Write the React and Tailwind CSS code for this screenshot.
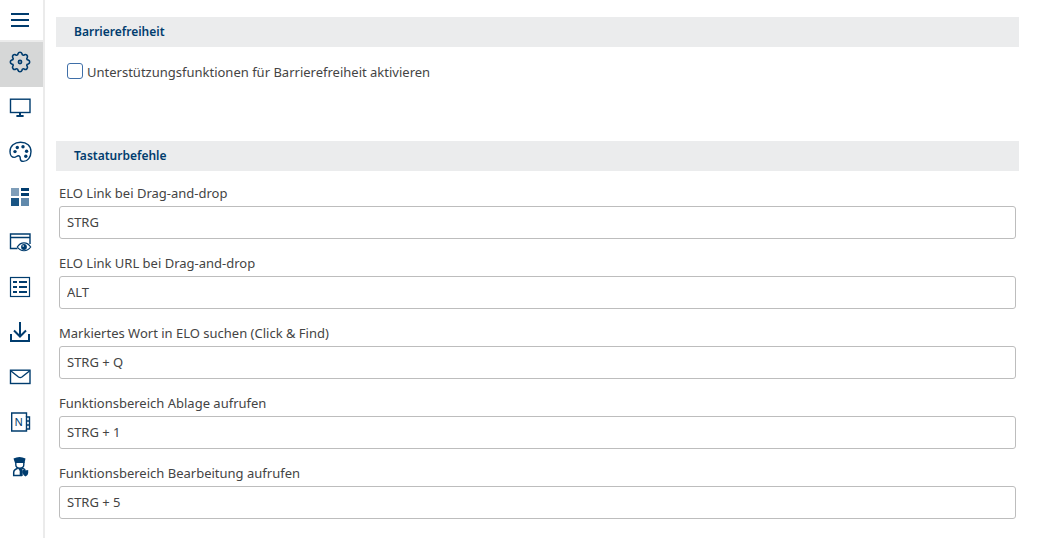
import React from "react";

function point(radius, degrees) {
  const a = (degrees * Math.PI) / 180;
  return `${(12 + radius * Math.cos(a)).toFixed(2)} ${(12 + radius * Math.sin(a)).toFixed(2)}`;
}

function gearPath() {
  let d = `M${point(8.5, -14)}`;
  for (let k = 0; k < 8; k += 1) {
    d += `A2.2 2.2 0 0 1 ${point(8.5, k * 45 + 14)}`;
    d += `A1.3 1.3 0 0 0 ${point(8.5, k * 45 + 31)}`;
  }
  return `${d}Z`;
}

function Icon({ children }) {
  return (
    <svg
      viewBox="0 0 24 24"
      className="size-6 shrink-0"
      fill="none"
      stroke="#003c6e"
      strokeWidth="1.4"
      aria-hidden="true"
    >
      {children}
    </svg>
  );
}

const items = [
  {
    label: "Allgemein",
    icon: (
      <>
        <path d={gearPath()} strokeWidth="1.6" />
        <circle cx="12" cy="12" r="1.6" strokeWidth="1.6" />
      </>
    ),
  },
  {
    label: "Anzeige",
    icon: (
      <>
        <rect x="2.5" y="4.2" width="19.5" height="13.3" />
        <path d="M11 18h2v2h2.6v2H8.4v-2H11z" fill="#003c6e" stroke="none" />
      </>
    ),
  },
  {
    label: "Design",
    icon: (
      <>
        <path d="M12.6 2.300C6.500 2.300 2 6 2 11.500C2 15 3.800 17.400 6.200 17.400C8.200 17.400 8.700 15.700 10.300 15.700C12 15.700 12.300 17.200 12.300 18.700C12.300 20.500 13.600 21.400 15.300 21.400C19.600 21.400 23 17.200 23 11.600C23 5.800 18.800 2.300 12.600 2.300Z" />
        <g fill="#003c6e" stroke="none">
          <circle cx="9.300" cy="7.500" r="1.700" />
          <circle cx="15" cy="6.700" r="1.700" />
          <circle cx="18.600" cy="11.300" r="1.700" />
          <circle cx="7" cy="11.600" r="1.700" />
          <circle cx="17.800" cy="16.300" r="1.700" />
        </g>
      </>
    ),
  },
  {
    label: "Kacheln",
    icon: (
      <g stroke="none">
        <rect x="3" y="3" width="8" height="8" fill="#7f9eb9" />
        <path d="M13 3h8v3h-8zM13 8h8v3h-8z" fill="#003c6e" />
        <rect x="3" y="13" width="8" height="8" fill="#1a5584" />
        <rect x="13" y="13" width="8" height="8" fill="#6189ab" />
      </g>
    ),
  },
  {
    label: "Vorschau",
    icon: (
      <>
        <path d="M9.500 18.500H2.500V4H22v10M2.500 7.500H22" />
        <path d="M9.300 17c3.500-5.500 9.900-5.500 13.400 0c-3.500 5-9.900 5-13.400 0Z" fill="#fff" strokeWidth="1.200" />
        <circle cx="16" cy="17" r="2.900" fill="#003c6e" stroke="none" />
        <circle cx="15.200" cy="16" r="0.800" fill="#fff" stroke="none" />
      </>
    ),
  },
  {
    label: "Listen",
    icon: (
      <>
        <rect x="2.500" y="2.500" width="19" height="19" strokeWidth="1.200" />
        <path d="M5 7h4M11 7h8M5 12h4M11 12h8M5 17h4M11 17h8" strokeWidth="2" />
      </>
    ),
  },
  {
    label: "Download",
    icon: <path d="M3 14v7h18v-7M12 2v14.500M6 10.500l6 6l6-6" strokeWidth="2" />,
  },
  {
    label: "E-Mail",
    icon: (
      <>
        <rect x="2.500" y="5.200" width="19.500" height="13.300" />
        <path d="M3 6l7.500 6q1.700 1.200 3.400 0L21.500 6" />
      </>
    ),
  },
  {
    label: "OneNote",
    icon: (
      <>
        <path d="M18.500 7V3H3.700v18h14.800v-2" />
        <path d="M18.500 7h3v12h-3zM18.500 11h3M18.500 15h3" />
        <text
          x="10.800"
          y="16"
          textAnchor="middle"
          fontFamily="Noto Sans, sans-serif"
          fontSize="11"
          fill="#003c6e"
          stroke="none"
        >
          N
        </text>
      </>
    ),
  },
  {
    label: "Administration",
    icon: (
      <>
        <path d="M5.500 3.500Q11.500 .5 17.500 3.500L16.500 8H7Z" fill="#003c6e" stroke="none" />
        <path d="M7.800 7v2.800c0 4.600 8 4.600 8 0V7" />
        <path d="M14 20.500H5.700v-3c0-2.200 1.500-3.300 4-4.200M14 13.300q2 .5 3.200 1.500" strokeWidth="1.500" />
        <path d="M10 13.200h4L14.700 16v5h-3v-5zM14.800 14.700q2.700 .8 5.400 .2v3q0 2.200-2.700 3.500q-2.700-1.300-2.700-3.500z" fill="#003c6e" stroke="none" />
      </>
    ),
  },
];

const shortcuts = [
  { id: "link", label: "ELO Link bei Drag-and-drop", value: "STRG" },
  { id: "url", label: "ELO Link URL bei Drag-and-drop", value: "ALT" },
  { id: "find", label: "Markiertes Wort in ELO suchen (Click & Find)", value: "STRG + Q" },
  { id: "ablage", label: "Funktionsbereich Ablage aufrufen", value: "STRG + 1" },
  { id: "bearbeitung", label: "Funktionsbereich Bearbeitung aufrufen", value: "STRG + 5" },
];

function SectionTitle({ children }) {
  return (
    <h2 className="flex h-[30px] items-center bg-[#ebeced] px-[18px] text-xs font-semibold text-[#003c6e]">
      {children}
    </h2>
  );
}

export default function App() {
  return (
    <div className="flex min-h-screen bg-white font-['Noto_Sans',sans-serif] text-[13px] text-[#444444]">
      <nav className="w-[45px] shrink-0 border-r-2 border-[#ebebeb]" aria-label="Einstellungen">
        <button
          type="button"
          aria-label="Menü"
          className="flex h-[42px] w-full items-center border-b-2 border-[#ebebeb] pl-2"
        >
          <Icon>
            <path d="M3 6h18M3 12h18M3 18h18" strokeWidth="2" />
          </Icon>
        </button>
        {items.map((item, index) => (
          <button
            key={item.label}
            type="button"
            aria-label={item.label}
            className={`flex h-[45px] w-full items-center pb-[5px] pl-2 ${index === 0 ? "bg-[#d6d7d7]" : ""}`}
          >
            <Icon>{item.icon}</Icon>
          </button>
        ))}
      </nav>

      <main className="min-w-0 flex-1 pt-[17px] pr-[21px] pl-[11px]">
        <section className="pb-[60px]">
          <SectionTitle>Barrierefreiheit</SectionTitle>
          <div className="mt-4 flex h-[18px] items-start gap-1 pl-[11px]">
            <input
              id="a11y"
              type="checkbox"
              className="size-4 shrink-0 appearance-none rounded-[3px] border border-[#3f6fa8] bg-white checked:bg-[#3f6fa8]"
            />
            <label htmlFor="a11y" className="leading-[18px]">
              Unterstützungsfunktionen für Barrierefreiheit aktivieren
            </label>
          </div>
        </section>

        <section>
          <SectionTitle>Tastaturbefehle</SectionTitle>
          <div className="flex flex-col gap-[14px] px-[3px] pt-3 pb-5">
            {shortcuts.map((s) => (
              <div key={s.id} className="flex flex-col gap-[3px]">
                <label htmlFor={s.id} className="leading-5">
                  {s.label}
                </label>
                <input
                  id={s.id}
                  type="text"
                  defaultValue={s.value}
                  className="h-[33px] w-full rounded-[3px] border border-[#bdbdbd] bg-white px-[7px] pb-[2px]"
                />
              </div>
            ))}
          </div>
        </section>
      </main>
    </div>
  );
}
